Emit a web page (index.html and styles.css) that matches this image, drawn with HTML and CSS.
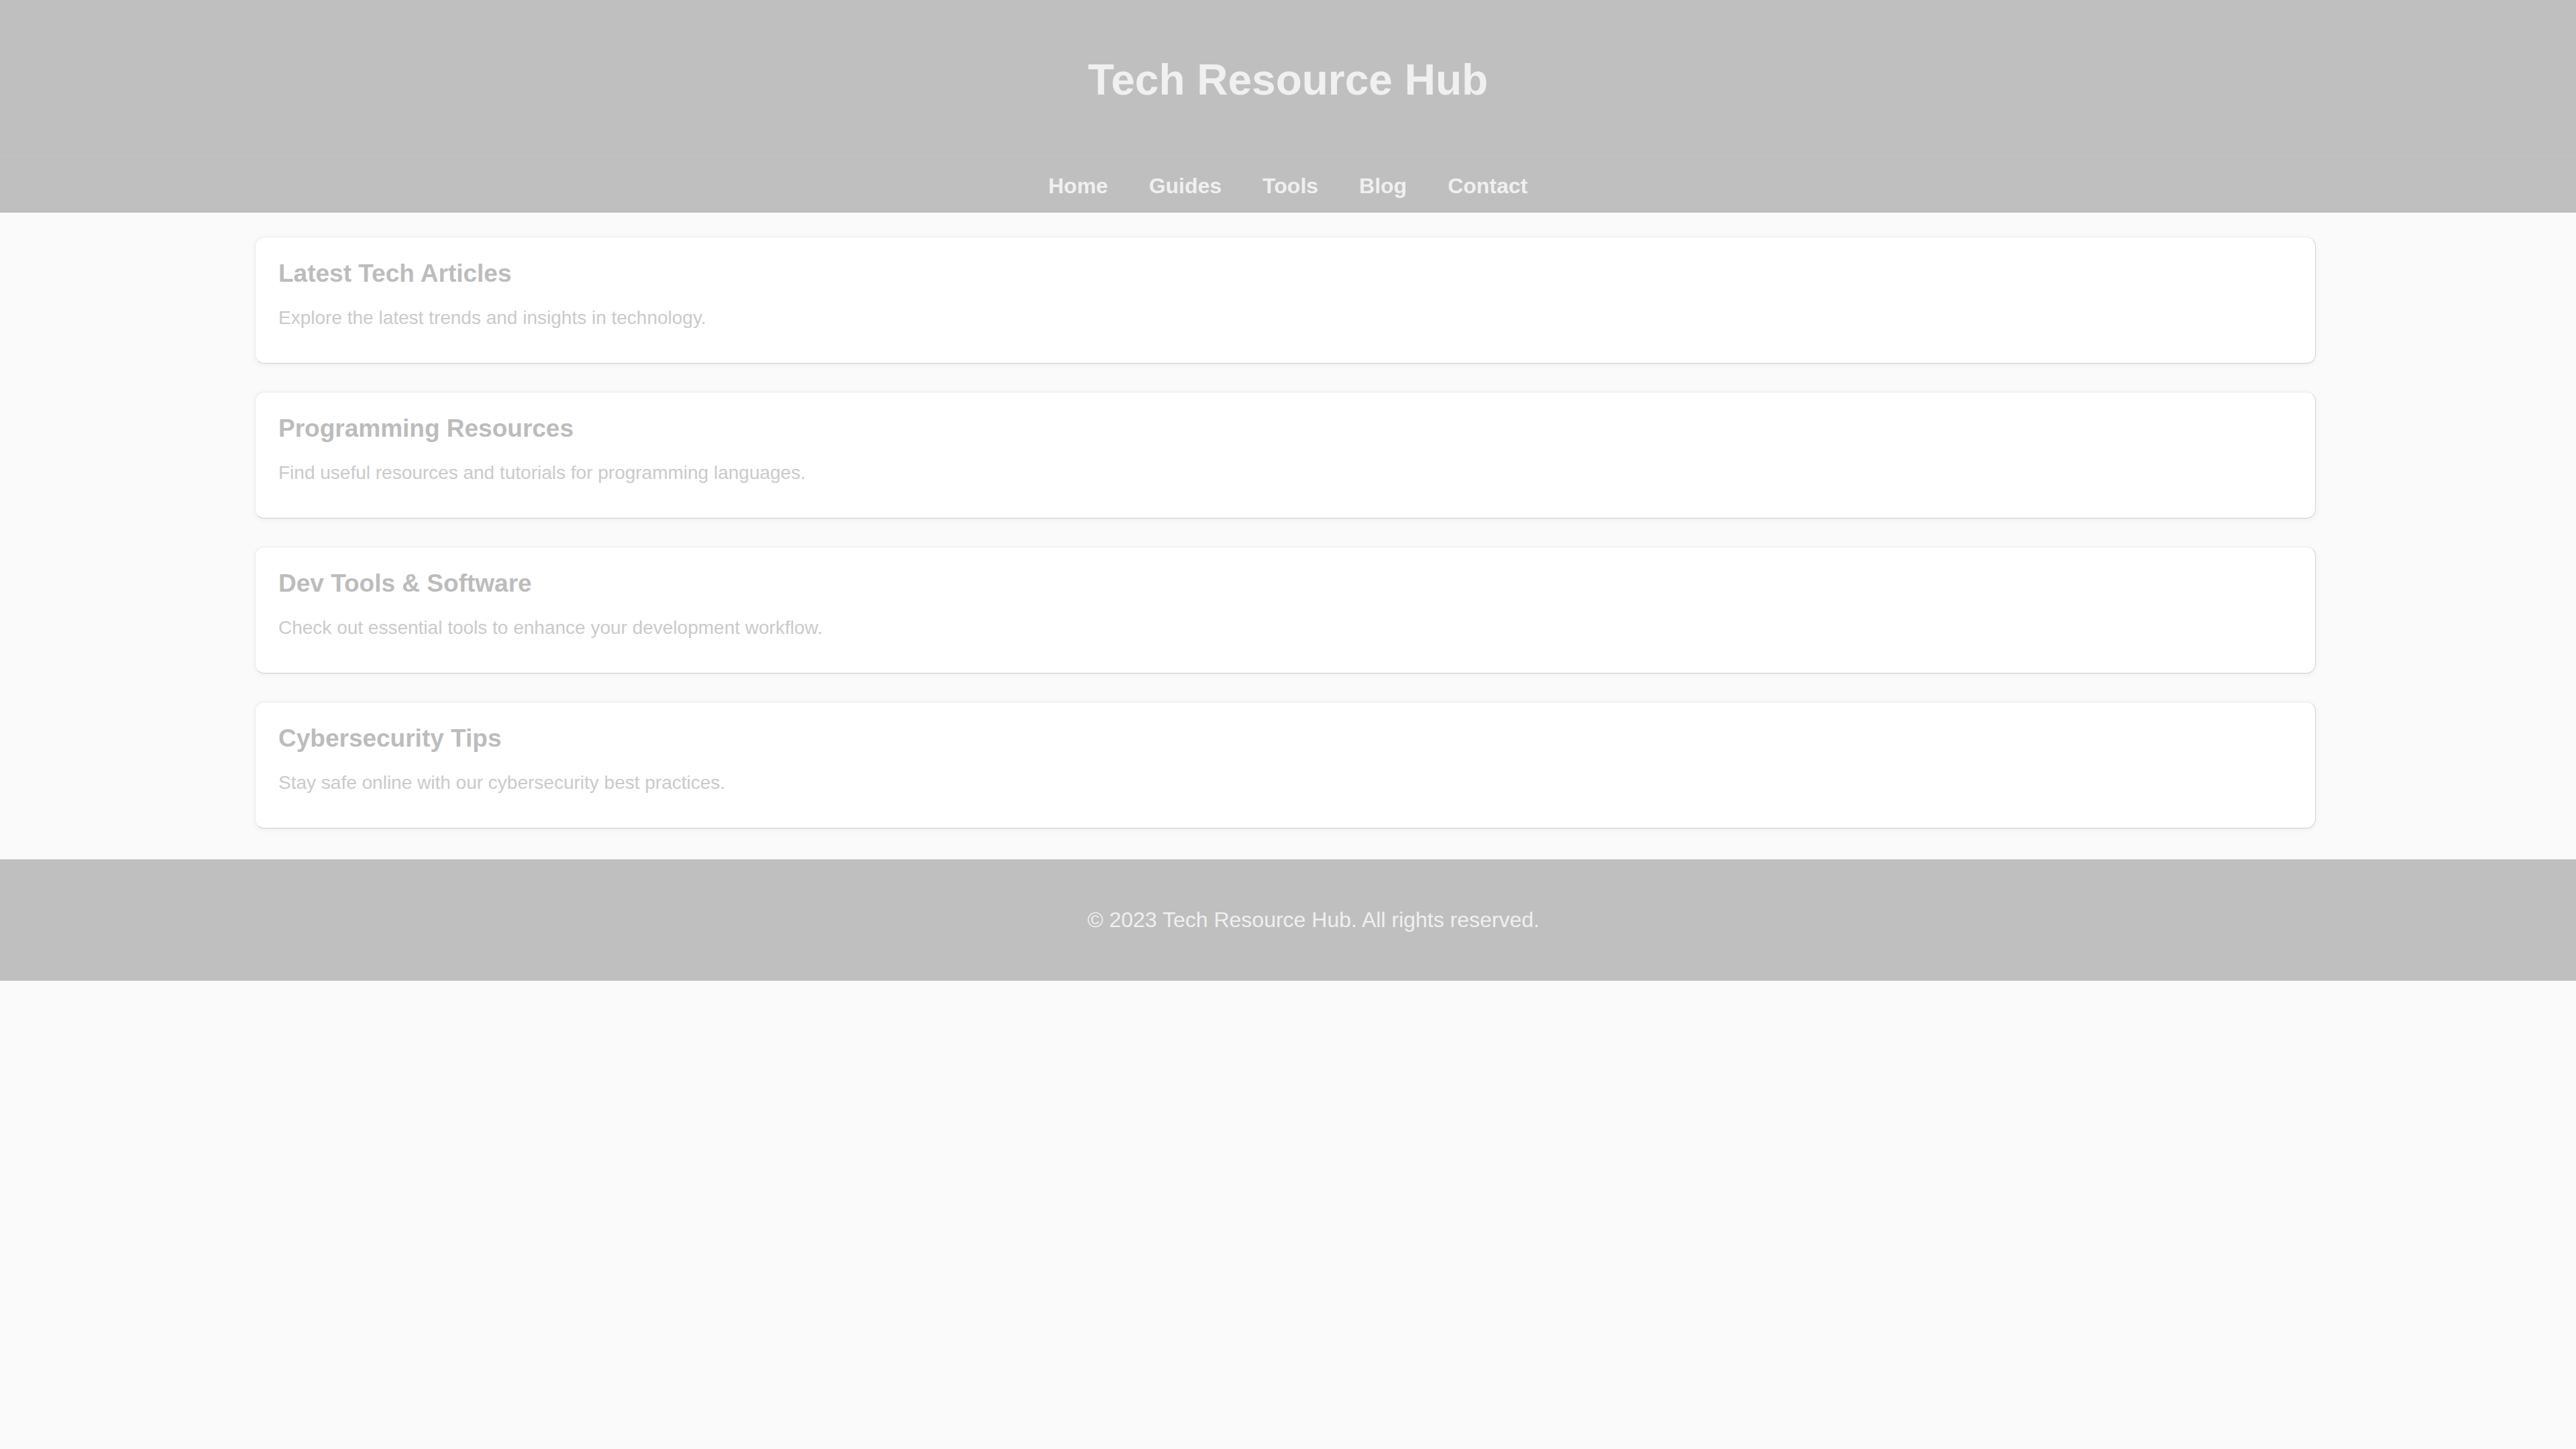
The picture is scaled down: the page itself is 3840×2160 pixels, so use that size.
FILE: index.html
```html
<!DOCTYPE html>
<html lang="en">
<head>
<meta charset="utf-8">
<title>Tech Resource Hub</title>
<link rel="stylesheet" href="styles.css">
</head>
<body>
<header class="site-header">
  <h1 class="site-title">Tech Resource Hub</h1>
  <nav class="site-nav">
    <a href="#">Home</a>
    <a href="#">Guides</a>
    <a href="#">Tools</a>
    <a href="#">Blog</a>
    <a href="#">Contact</a>
  </nav>
</header>
<main class="content">
  <section class="card">
    <h2 class="card-title">Latest Tech Articles</h2>
    <p class="card-text">Explore the latest trends and insights in technology.</p>
  </section>
  <section class="card">
    <h2 class="card-title">Programming Resources</h2>
    <p class="card-text">Find useful resources and tutorials for programming languages.</p>
  </section>
  <section class="card">
    <h2 class="card-title">Dev Tools &amp; Software</h2>
    <p class="card-text">Check out essential tools to enhance your development workflow.</p>
  </section>
  <section class="card">
    <h2 class="card-title">Cybersecurity Tips</h2>
    <p class="card-text">Stay safe online with our cybersecurity best practices.</p>
  </section>
</main>
<footer class="site-footer">
  <p class="footer-text">&copy; 2023 Tech Resource Hub. All rights reserved.</p>
</footer>
</body>
</html>
```

FILE: styles.css
```css
html, body {
  margin: 0;
  padding: 0;
}
body {
  background: #fafafa;
  font-family: "Liberation Sans", Arial, Helvetica, sans-serif;
  font-size: 32px;
}
.site-header {
  background: #bfbfbf;
  color: #f0f0f0;
  text-align: center;
  padding-top: 82px;
}
.site-title {
  margin: 0;
  font-size: 64px;
  font-weight: bold;
  line-height: 74px;
  color: #f0f0f0;
}
.site-nav {
  margin-top: 77px;
  border-top: 1px solid #c3c3c3;
  padding: 25px 0 21px;
  display: flex;
  justify-content: center;
  gap: 61px;
}
.site-nav a {
  color: #f0f0f0;
  text-decoration: none;
  font-weight: bold;
  font-size: 32px;
  line-height: 37px;
}
.content {
  width: 80%;
  margin: 0 auto 0 calc(10% - 4px);
  padding: 36px 0 46px;
  display: flex;
  flex-direction: column;
  gap: 42px;
}
.card {
  background: #ffffff;
  border: 1px solid #ebebeb;
  border-right-color: #d4d4d4;
  border-bottom-color: #cfcfcf;
  border-radius: 14px;
  box-shadow: 0 2px 8px rgba(0, 0, 0, 0.05);
  padding: 32px 34px 23px;
}
.card-title {
  margin: 0 0 29px;
  font-size: 37px;
  line-height: 43px;
  font-weight: bold;
  color: #bcbcbc;
}
.card-text {
  margin: 0 0 28px;
  font-size: 28px;
  line-height: 32px;
  color: #cacaca;
}
.site-footer {
  background: #bfbfbf;
  color: #f0f0f0;
  text-align: center;
  padding: 72px 0 72px 76px;
}
.footer-text {
  margin: 0;
  font-size: 32px;
  line-height: 37px;
}
```
